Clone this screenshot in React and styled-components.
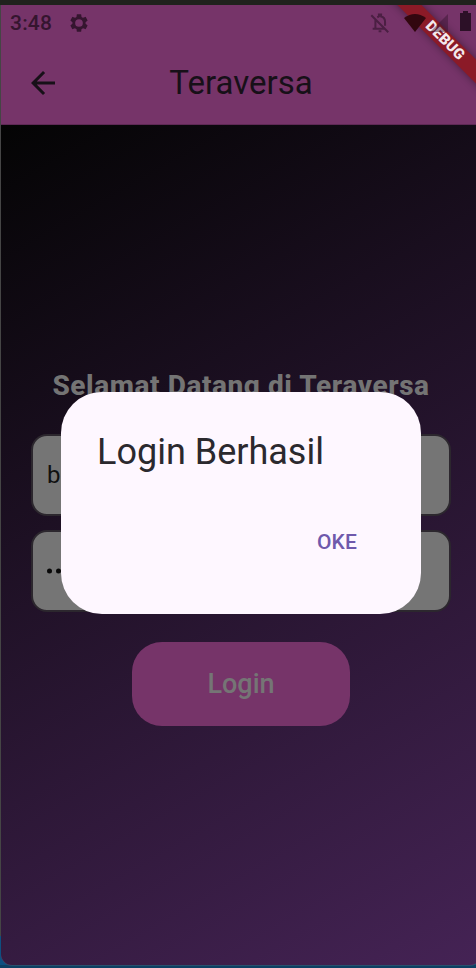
import React from "react";
import styled, { createGlobalStyle } from "styled-components";

const GlobalStyle = createGlobalStyle`
  * { box-sizing: border-box; }
  body { margin: 0; background: #20221d; font-family: Roboto, sans-serif; overflow: hidden; }
`;

const Desktop = styled.div`
  width: 476px;
  height: 968px;
  padding: 5px 0 3px 1px;
  overflow: hidden;
  background: linear-gradient(180deg, #20221d 0 5px, #454545 5px 936px, #0e4f80 936px 965px, #0d3f63 965px);
`;

const Screen = styled.div`
  position: relative;
  width: 480px;
  height: 960px;
  display: flex;
  flex-direction: column;
  overflow: hidden;
  border-radius: 0 0 11px 11px;
  box-shadow: 0 1px 0 0 #28506d;
  background: #763469;
`;

const StatusBar = styled.div`
  position: relative;
  z-index: 2;
  height: 36px;
  display: flex;
  align-items: center;
  padding: 0 10px 0 9px;
  color: #35152f;
`;

const Clock = styled.span`
  width: 58px;
  font-size: 21px;
  font-weight: 500;
  letter-spacing: 0.2px;
`;

const StatusIcons = styled.div`
  display: flex;
  align-items: center;
  margin-left: auto;
`;

const Banner = styled.div`
  position: absolute;
  z-index: 1;
  left: 374px;
  top: 27px;
  width: 140px;
  height: 17px;
  transform: rotate(45deg);
  background: #8b1a27;
  box-shadow: 0 0 8px rgba(0, 0, 0, 0.4);
  color: #f4e9ec;
  font-size: 15px;
  font-weight: 900;
  line-height: 17px;
  text-align: center;
`;

const AppBar = styled.header`
  height: 84px;
  display: grid;
  grid-template-columns: 84px 1fr 84px;
  align-items: center;
  justify-items: center;
  border-bottom: 1px solid #5e2955;
  color: #171018;
`;

const AppTitle = styled.h1`
  margin: 0;
  font-size: 33px;
  line-height: 40px;
  font-weight: 400;
`;

const Body = styled.main`
  flex: 1;
  display: flex;
  flex-direction: column;
  align-items: center;
  padding-top: 242px;
  background: linear-gradient(150.3deg, #040404, #452355);
`;

const Heading = styled.h2`
  margin: 0 0 29px;
  font-size: 28px;
  line-height: 38px;
  font-weight: 800;
  letter-spacing: 0.57px;
  color: #747474;
  white-space: nowrap;
`;

const Field = styled.div`
  width: 420px;
  height: 82px;
  margin-bottom: 14px;
  padding: 0 14px;
  display: flex;
  align-items: center;
  border: 2px solid #2c272e;
  border-radius: 16px;
  background: #757575;
  color: #101010;
  font-size: 24px;
`;

const LoginButton = styled.button`
  width: 218px;
  height: 84px;
  margin-top: 16px;
  padding: 0;
  border: 0;
  border-radius: 30px;
  background: #763469;
  color: #757575;
  font: 500 27px Roboto, sans-serif;
`;

const Overlay = styled.div`
  position: absolute;
  inset: 0;
  z-index: 3;
  display: flex;
  align-items: center;
  justify-content: center;
  padding-top: 35px;
`;

const Dialog = styled.section`
  width: 360px;
  height: 222px;
  padding: 36px;
  display: flex;
  flex-direction: column;
  border-radius: 41px;
  background: #fef7ff;
`;

const DialogTitle = styled.h3`
  margin: 0;
  font-size: 36px;
  line-height: 48px;
  font-weight: 400;
  color: #2b292e;
  white-space: nowrap;
`;

const DialogAction = styled.button`
  align-self: flex-end;
  margin-top: 36px;
  margin-right: 28px;
  padding: 0;
  border: 0;
  background: none;
  color: #6f59ac;
  font: 500 21px/60px Roboto, sans-serif;
  letter-spacing: 0.15px;
`;

const BellIcon = styled.svg`
  margin-right: 13px;
`;

const WifiIcon = styled.svg`
  margin: 0 4px 1px 0;
`;

const SignalIcon = styled.svg`
  margin: 0 12px 1px 0;
`;

const BatteryIcon = styled.svg`
  margin-bottom: 4px;
`;

function Gear() {
  return (
    <svg width="22" height="22" viewBox="0 0 24 24" fill="currentColor">
      <path d="M19.14 12.94c.04-.3.06-.61.06-.94 0-.32-.02-.64-.07-.94l2.03-1.58a.49.49 0 0 0 .12-.61l-1.92-3.32a.49.49 0 0 0-.59-.22l-2.39.96c-.5-.38-1.03-.7-1.62-.94l-.36-2.54a.48.48 0 0 0-.48-.41h-3.84c-.24 0-.43.17-.47.41l-.36 2.54c-.59.24-1.13.57-1.62.94l-2.39-.96a.48.48 0 0 0-.59.22L2.74 8.87a.47.47 0 0 0 .12.61l2.03 1.58c-.05.3-.09.63-.09.94s.02.64.07.94l-2.03 1.58a.49.49 0 0 0-.12.61l1.92 3.32c.12.22.37.29.59.22l2.39-.96c.5.38 1.03.7 1.62.94l.36 2.54c.05.24.24.41.48.41h3.84c.24 0 .44-.17.47-.41l.36-2.54c.59-.24 1.13-.56 1.62-.94l2.39.96c.22.08.47 0 .59-.22l1.92-3.32a.47.47 0 0 0-.12-.61zM12 16.2a4.2 4.2 0 1 1 0-8.4 4.2 4.2 0 0 1 0 8.4z" />
    </svg>
  );
}

function BellOff() {
  return (
    <BellIcon width="22" height="22" viewBox="0 0 24 24" fill="none" stroke="#4b1f43" strokeWidth="2.2">
      <path d="M2.5 3.5 21 22M7 8.5V18.2H17M4 18.2h3M9 5.7l1.8-.9V2.8h2.4v2c2.6.6 4.3 3 4.3 5.7v4.5" />
      <path d="M10.5 21h3" />
    </BellIcon>
  );
}

function Wifi() {
  return (
    <WifiIcon width="22" height="18" viewBox="0 0 22 18">
      <path d="M0 4Q11-4 22 4L11 18Z" fill="#32070f" />
    </WifiIcon>
  );
}

function Signal() {
  return (
    <SignalIcon width="18" height="18" viewBox="0 0 18 18">
      <path d="M0 18 18 0V18Z" fill="#35152f" fillOpacity=".45" />
    </SignalIcon>
  );
}

function Battery() {
  return (
    <BatteryIcon width="11" height="20" viewBox="0 0 11 20">
      <path d="M3 0h5v2h3v18H0V2h3Z" fill="#2c1027" />
    </BatteryIcon>
  );
}

export default function App() {
  return (
    <>
      <GlobalStyle />
      <Desktop>
        <Screen>
          <StatusBar>
            <Clock>3:48</Clock>
            <Gear />
            <StatusIcons>
              <BellOff />
              <Wifi />
              <Signal />
              <Battery />
            </StatusIcons>
          </StatusBar>
          <AppBar>
            <svg width="36" height="36" viewBox="0 0 24 24" fill="currentColor">
              <path d="M20 11H7.83l5.59-5.59L12 4l-8 8 8 8 1.41-1.41L7.83 13H20z" />
            </svg>
            <AppTitle>Teraversa</AppTitle>
          </AppBar>
          <Body>
            <Heading>Selamat Datang di Teraversa</Heading>
            <Field>b</Field>
            <Field>
              <svg width="24" height="8" viewBox="0 0 24 8" fill="#080808">
                <circle cx="2.5" cy="4" r="2.5" />
                <circle cx="11.5" cy="4" r="2.5" />
                <circle cx="20.5" cy="4" r="2.5" />
              </svg>
            </Field>
            <LoginButton>Login</LoginButton>
          </Body>
          <Banner>DEBUG</Banner>
          <Overlay>
            <Dialog>
              <DialogTitle>Login Berhasil</DialogTitle>
              <DialogAction>OKE</DialogAction>
            </Dialog>
          </Overlay>
        </Screen>
      </Desktop>
    </>
  );
}
